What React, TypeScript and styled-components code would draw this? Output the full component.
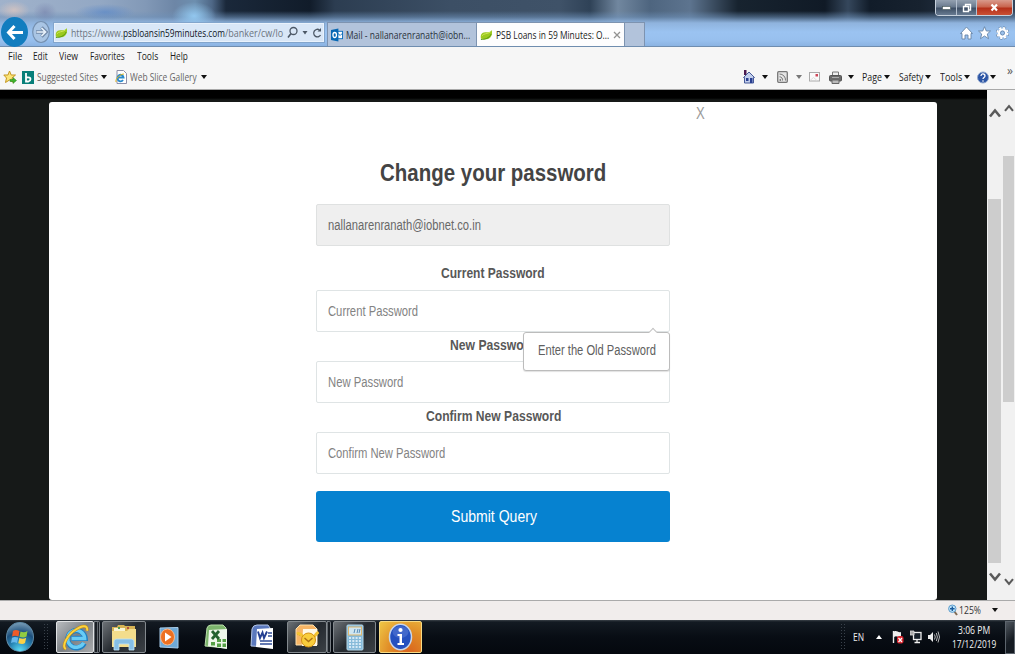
import React, { useLayoutEffect, useRef, useState } from "react";
import styled, { createGlobalStyle, css } from "styled-components";

const UI = `"Open Sans", "Noto Sans", sans-serif`;
const SANS = `"Liberation Sans", Arial, sans-serif`;

const GlobalStyle = createGlobalStyle`
  *, *::before, *::after { box-sizing: border-box; }
  html, body { margin: 0; padding: 0; overflow: hidden; }
  svg { display: block; flex: none; }
`;

/* Text squeezed horizontally to a given width */
const FitBox = styled.span<{ $w: number; $size: number; $color?: string; $bold?: boolean; $font?: string }>`
  display: block;
  flex: none;
  width: ${(p) => p.$w}px;
  white-space: nowrap;
  font-family: ${(p) => p.$font ?? UI};
  font-size: ${(p) => p.$size}px;
  font-weight: ${(p) => (p.$bold ? 700 : 400)};
  line-height: 1.25;
  color: ${(p) => p.$color ?? "#1c1c1c"};
`;
const FitInner = styled.span`
  display: inline-block;
  transform-origin: 0 50%;
`;

type FitProps = { w: number; size: number; color?: string; bold?: boolean; font?: string; children: React.ReactNode };
function Fit({ w, size, color, bold, font, children }: FitProps) {
  const ref = useRef<HTMLSpanElement>(null);
  const [scale, setScale] = useState(1);
  useLayoutEffect(() => {
    if (ref.current) setScale(w / ref.current.offsetWidth);
  }, [w]);
  return (
    <FitBox $w={w} $size={size} $color={color} $bold={bold} $font={font}>
      <FitInner ref={ref} style={{ transform: `scaleX(${scale})` }}>{children}</FitInner>
    </FitBox>
  );
}

const Screen = styled.div`
  width: 1015px;
  height: 654px;
  display: flex;
  flex-direction: column;
  overflow: hidden;
  background: #f6f6f6;
`;

/* ---------- Title area ---------- */
const Header = styled.header`
  height: 47px;
  flex: none;
  border-bottom: 1px solid #6f8daf;
  background:
    radial-gradient(ellipse 22px 14px at 194px 16px, rgba(150, 205, 245, 0.9), transparent),
    radial-gradient(ellipse 16px 9px at 14px 10px, rgba(225, 200, 190, 0.7), transparent),
    radial-gradient(ellipse 12px 10px at 45px 12px, rgba(110, 120, 165, 0.5), transparent),
    radial-gradient(ellipse 30px 8px at 105px 12px, rgba(80, 130, 200, 0.6), transparent),
    linear-gradient(to bottom, transparent 0 11px, rgba(110, 145, 185, 0.55) 17px, #8fb3dd 23px, #9bc3f1 32px, #98c0ee 40px, #8bb3e2 46px),
    linear-gradient(to right, #a0b2cb 0, #93a8c4 100px, #8299b7 145px, #6d86a6 175px, #6d8faf 195px, #4e6786 212px, #1a283a 226px, #111c2a 310px, #2c3d51 335px, #3c4f65 450px, #3f5268 560px, #2f4257 590px, #71879f 618px, #4e657f 650px, #5d748f 690px, #17232f 738px, #101a26 825px, #35475c 848px, #111c29 870px, #17222f 920px, #32455c 1015px);
`;
const TitleRow = styled.div`
  height: 22px;
  display: flex;
  justify-content: flex-end;
  align-items: flex-start;
  padding-right: 2px;
`;
const WindowButtons = styled.div`
  display: flex;
  height: 16px;
  border: 1px solid #c6d0dc;
  border-top: 0;
  border-radius: 0 0 4px 4px;
  overflow: hidden;
`;
const WinButton = styled.div<{ $w: number; $close?: boolean }>`
  width: ${(p) => p.$w}px;
  display: flex;
  align-items: center;
  justify-content: center;
  border-right: ${(p) => (p.$close ? "0" : "1px solid #b4c0cf")};
  background: ${(p) =>
    p.$close
      ? "linear-gradient(#d99a8c 0, #c9654f 45%, #b5301a 55%, #c95034 100%)"
      : "linear-gradient(#93a0b0 0, #6b7b8f 45%, #3f5066 55%, #687b92 100%)"};
`;
const NavRow = styled.div`
  height: 24px;
  display: flex;
  align-items: flex-start;
`;
const BackSlot = styled.div`
  width: 53px;
  display: flex;
  align-items: center;
  gap: 3px;
  margin-top: -5px;
  padding-left: 1px;
`;
const AddressBar = styled.div`
  width: 272px;
  height: 21px;
  display: flex;
  align-items: center;
  border: 1px solid #82a5cc;
  background: #d9e7f7;
  box-shadow: inset 0 0 0 1px #e9f2fc;
  padding-left: 1px;
`;
const AddressActions = styled.div`
  display: flex;
  align-items: center;
  gap: 4px;
  margin-left: 4px;
`;
const Tabs = styled.div`
  display: flex;
  margin-left: 2px;
  height: 24px;
`;
const Tab = styled.div<{ $w: number; $active?: boolean }>`
  width: ${(p) => p.$w}px;
  display: flex;
  align-items: center;
  gap: 3px;
  padding-left: 3px;
  border: 1px solid #7d93b0;
  border-bottom: 0;
  margin-right: -1px;
  background: ${(p) => (p.$active ? "#fdfdfe" : "#b2c3db")};
`;
const HeaderIcons = styled.div`
  display: flex;
  gap: 5px;
  margin-left: auto;
  padding: 4px 6px 0 0;
`;

/* ---------- Menu + favourites ---------- */
const MenuBar = styled.nav`
  height: 19px;
  flex: none;
  display: flex;
  align-items: center;
  padding: 0 0 2px 8px;
`;
const MenuItem = styled.div<{ $gap: number }>`
  margin-right: ${(p) => p.$gap}px;
`;
const Favorites = styled.div`
  height: 24px;
  flex: none;
  display: flex;
  align-items: center;
  padding: 0 2px 1px 3px;
  border-bottom: 1px solid #a9a9a9;
`;
const Gap = styled.div<{ $l: number }>`
  margin-left: ${(p) => p.$l}px;
  flex: none;
  display: flex;
  align-items: center;
`;
const Push = styled.div`
  margin-left: auto;
  display: flex;
  align-items: center;
`;
const Caret = styled.i<{ $c?: string }>`
  display: block;
  flex: none;
  border: 3px solid transparent;
  border-top: 4px solid ${(p) => p.$c ?? "#111"};
  border-bottom: 0;
`;
const More = styled.div`
  margin: -14px 0 0 11px;
`;

/* ---------- Page ---------- */
const Page = styled.main`
  height: 510px;
  flex: none;
  display: flex;
  background: #161918;
`;
const Backdrop = styled.div`
  flex: 1;
  padding: 12px 50px 0 49px;
  background: linear-gradient(#000 0 8px, #161918 10px);
`;
const Modal = styled.section`
  position: relative;
  height: 498px;
  background: #fff;
  border-radius: 3px;
  display: flex;
  flex-direction: column;
  align-items: center;
  padding-top: 56px;
`;
const Close = styled.div`
  position: absolute;
  left: 647px;
  top: 2px;
`;
const Form = styled.form`
  width: 354px;
  display: flex;
  flex-direction: column;
  align-items: center;
`;
const Field = styled.div<{ $disabled?: boolean }>`
  position: relative;
  width: 354px;
  height: 42px;
  display: flex;
  align-items: center;
  padding: 1px 0 0 11px;
  border: 1px solid ${(p) => (p.$disabled ? "#dfe1e1" : "#dfe4e5")};
  border-radius: 2px;
  background: ${(p) => (p.$disabled ? "#efefef" : "#fff")};
`;
const Label = styled.div<{ $h: number; $pad?: number }>`
  height: ${(p) => p.$h}px;
  padding-top: ${(p) => p.$pad ?? 5}px;
`;
const Heading = styled.div`
  height: 46px;
`;
const Tooltip = styled.div`
  position: absolute;
  right: -1px;
  top: 41px;
  z-index: 2;
  width: 147px;
  height: 39px;
  display: flex;
  align-items: center;
  padding: 0 0 1px 14px;
  background: #fff;
  border: 1px solid #bcbcbc;
  border-radius: 3px;
  box-shadow: 0 1px 1px rgba(0, 0, 0, 0.12);
  &::before {
    content: "";
    position: absolute;
    right: 13px;
    top: -4px;
    width: 6px;
    height: 6px;
    background: #fff;
    border: 1px solid #c4c4c4;
    border-right: 0;
    border-bottom: 0;
    transform: rotate(45deg);
  }
`;
const Submit = styled.div`
  width: 354px;
  height: 51px;
  margin-top: 17px;
  display: flex;
  align-items: center;
  justify-content: center;
  padding-left: 1px;
  border-radius: 3px;
  background: #0682d0;
`;
const ScrollBar = styled.div<{ $w: number; $top: number; $bottom: number }>`
  width: ${(p) => p.$w}px;
  display: flex;
  flex-direction: column;
  justify-content: space-between;
  align-items: center;
  background: #f1f1f1;
  padding: ${(p) => p.$top}px 0 ${(p) => p.$bottom}px;
`;
const Thumb = styled.div<{ $h: number; $above: number }>`
  width: calc(100% - 2px);
  height: ${(p) => p.$h}px;
  margin: ${(p) => p.$above}px 0 auto;
  background: #cdcdcd;
`;

/* ---------- Status + taskbar ---------- */
const Status = styled.div`
  height: 20px;
  flex: none;
  display: flex;
  align-items: center;
  justify-content: flex-end;
  padding: 0 17px 1px 0;
  background: #f1edec;
  border-top: 1px solid #aaa;
`;
const Taskbar = styled.footer`
  height: 34px;
  flex: none;
  display: flex;
  align-items: center;
  background: linear-gradient(#3a4148 0, #131a22 2px, #080d14 50%, #04080e 100%);
`;
const Orb = styled.div`
  width: 28px;
  height: 30px;
  margin-left: 6px;
  display: flex;
  align-items: center;
  justify-content: center;
  border-radius: 50%;
  border: 1px solid #5f8ba8;
  background: radial-gradient(circle at 50% 100%, #5fe0f8 0, #2583b4 35%, #1d4f7c 60%, #8fb0c6 100%);
`;
const Dots = styled.div`
  width: 6px;
  height: 28px;
  background: radial-gradient(circle, #3a424b 0.7px, transparent 1px) 0 0 / 3px 3px;
`;
const tones = {
  active: css`background: linear-gradient(135deg, #b9bcbf, #7c8186 50%, #a9abad); border-color: #e0e2e4;`,
  plain: css`background: linear-gradient(135deg, #6c7176, #24292f 50%, #3b4045); border-color: #83898e;`,
  alert: css`background: radial-gradient(ellipse at 70% 110%, #d9601d 0, #e08c27 50%, #efc746 100%); border-color: #f6da85;`,
  none: css`border-color: transparent;`,
};
const TaskButton = styled.div<{ $w: number; $l: number; $tone: keyof typeof tones }>`
  width: ${(p) => p.$w}px;
  height: 32px;
  margin-left: ${(p) => p.$l}px;
  display: flex;
  align-items: center;
  justify-content: center;
  border: 1px solid;
  border-radius: 2px;
  ${(p) => tones[p.$tone]}
`;
const Stack = styled.div<{ $w: number }>`
  width: ${(p) => p.$w}px;
  height: 32px;
  border: 1px solid #777d83;
  border-left: 0;
  border-radius: 0 2px 2px 0;
  background: repeating-linear-gradient(to right, #5f656b 0 1px, #1a1f25 1px 3px);
`;
const Tray = styled.div`
  margin-left: auto;
  display: flex;
  align-items: center;
  height: 34px;
`;
const Clock = styled.div`
  width: 45px;
  margin-left: 11px;
  display: flex;
  flex-direction: column;
  align-items: center;
`;
const ShowDesktop = styled.div`
  width: 10px;
  height: 33px;
  margin-left: 9px;
  border: 1px solid #5c646c;
  background: linear-gradient(135deg, #50575f, #151b22 60%);
`;

/* ---------- Icons ---------- */
const Leaf = () => (
  <svg width="13" height="12" viewBox="0 0 14 12">
    <path d="M1 10C0 4 3 3 7 3C10 3 12 2 12.500 0.500C14 5 12 10 7 10.500C4 11 3 10 1 10Z" fill="#9cc91f" />
    <path d="M1 10.800C5 11 10 9.500 12 5" stroke="#4f9410" fill="none" />
    <path d="M2 7C4 4 8 5 11 3" stroke="#d0e85b" fill="none" />
  </svg>
);
const Chevron = ({ w, down }: { w: number; down?: boolean }) => (
  <svg width={w} height={w - 2} viewBox="0 0 12 10">
    <path d={down ? "M1 1.500L6 7.500L11 1.500" : "M1 8.500L6 2.500L11 8.500"} fill="none" stroke="#5a5a5a" strokeWidth="2.600" />
  </svg>
);
const IeGlyph = ({ s }: { s: number }) => (
  <svg width={s} height={s} viewBox="0 0 28 28">
    <path d="M23 20A9 9 0 1 1 24 15H10" fill="none" stroke="#1d7fc4" strokeWidth="5.500" />
    <path d="M22.500 19.500A8.800 8.800 0 1 1 23.500 15H10" fill="none" stroke="#68ccf5" strokeWidth="3.600" />
    <path d="M4 26C-1 23 6 11 14 6C20 2 27 0 26 7" fill="none" stroke="#c78b0c" strokeWidth="3" />
    <path d="M4 26C-1 23 6 11 14 6C20 2 27 0 26 7" fill="none" stroke="#fbd440" strokeWidth="2" />
  </svg>
);

export default function App() {
  return (
    <Screen>
      <GlobalStyle />
      <Header>
        <TitleRow>
          <WindowButtons>
            <WinButton $w={21}>
              <svg width="9" height="4"><rect x=".5" y=".5" width="8" height="3" fill="#fff" stroke="#455" strokeWidth=".6" /></svg>
            </WinButton>
            <WinButton $w={20}>
              <svg width="10" height="10"><path d="M3.500 3V1.500H8.500V7H7M1.500 3.500H6.500V8.500H1.500Z" fill="none" stroke="#fff" strokeWidth="1.400" /></svg>
            </WinButton>
            <WinButton $w={35} $close>
              <svg width="9" height="9"><path d="M1.500 1.500L7 7.500M7 1.500L1.500 7.500" stroke="#fff" strokeWidth="2.200" /></svg>
            </WinButton>
          </WindowButtons>
        </TitleRow>
        <NavRow>
          <BackSlot>
            <svg width="28" height="30" viewBox="0 0 28 30">
              <ellipse cx="13.500" cy="15" rx="13.500" ry="15" fill="#127dbf" />
              <path d="M22 15.500H8M13.500 9L7.500 15.500L13.500 22" fill="none" stroke="#fff" strokeWidth="3" />
            </svg>
            <svg width="20" height="24" viewBox="0 0 20 24">
              <ellipse cx="9" cy="12" rx="8.300" ry="10.500" fill="#a9c5e4" stroke="#7590b0" strokeWidth="1.200" />
              <path d="M4 12H14M9.500 7.500L14 12L9.500 16.500" fill="none" stroke="#7189a8" strokeWidth="3.400" />
              <path d="M4.500 12H13.500M9.500 8L13.500 12L9.500 16" fill="none" stroke="#e8f1fa" strokeWidth="1.700" />
            </svg>
          </BackSlot>
          <AddressBar>
            <Leaf />
            <Gap $l={3}>
              <Fit w={52} size={11} color="#6c757f">https://www.</Fit>
              <Fit w={102} size={11} color="#10161d">psbloansin59minutes.com</Fit>
              <Fit w={58} size={11} color="#6c757f">/banker/cw/lo</Fit>
            </Gap>
            <AddressActions>
              <svg width="11" height="13"><circle cx="6.500" cy="5" r="3.500" fill="none" stroke="#4c5866" strokeWidth="1.300" /><path d="M4 7.500L1 11.500" stroke="#4c5866" strokeWidth="1.600" /></svg>
              <svg width="6" height="4"><path d="M0.500 0H5.500L3 3.500Z" fill="#4c5866" /></svg>
              <svg width="11" height="12"><path d="M8.500 8A3.600 3.800 0 1 1 7.500 3" fill="none" stroke="#4c5866" strokeWidth="1.400" /><path d="M5.500 4.500H9V1Z" fill="#4c5866" /></svg>
            </AddressActions>
          </AddressBar>
          <Tabs>
            <Tab $w={150}>
              <svg width="12" height="14" viewBox="0 0 13 14">
                <rect x="7" y="3" width="5.500" height="8" fill="#fff" stroke="#0a6ebd" />
                <path d="M7 5L10 7.500L12.500 5" fill="none" stroke="#0a6ebd" />
                <path d="M0 1.500L8 0V14L0 12.500Z" fill="#0768b4" />
                <ellipse cx="4" cy="7" rx="1.900" ry="2.700" fill="none" stroke="#fff" strokeWidth="1.400" />
              </svg>
              <Fit w={124} size={11} color="#2b333c">Mail - nallanarenranath@iobn...</Fit>
            </Tab>
            <Tab $w={149} $active>
              <Leaf />
              <Fit w={113} size={11}>PSB Loans in 59 Minutes: O...</Fit>
              <Gap $l={1}>
                <svg width="8" height="8"><path d="M1 1L7 7M7 1L1 7" stroke="#929292" strokeWidth="1.300" /></svg>
              </Gap>
            </Tab>
            <Tab $w={21} />
          </Tabs>
          <HeaderIcons>
            <svg width="13" height="14" viewBox="0 0 13 14"><path d="M6.500 1L12.500 7.500H11V13H8V9H5V13H2V7.500H.5Z" fill="#fff" stroke="#6784a6" strokeWidth=".9" /></svg>
            <svg width="13" height="14" viewBox="0 0 13 14"><path d="M6.500 .7L8.300 5H12.500L9.300 8L10.500 12.700L6.500 10L2.500 12.700L3.700 8L.5 5H4.700Z" fill="#fff" stroke="#6784a6" strokeWidth=".9" /></svg>
            <svg width="13" height="14" viewBox="0 0 13 14">
              <circle cx="6.500" cy="7" r="5.200" fill="none" stroke="#6784a6" strokeWidth="3" strokeDasharray="2.500 1.580" />
              <circle cx="6.500" cy="7" r="5.200" fill="none" stroke="#fff" strokeWidth="1.800" strokeDasharray="2.300 1.780" />
              <circle cx="6.500" cy="7" r="3.500" fill="none" stroke="#fff" strokeWidth="2.200" />
              <circle cx="6.500" cy="7" r="2" fill="#9cc3ee" stroke="#6784a6" strokeWidth=".8" />
            </svg>
          </HeaderIcons>
        </NavRow>
      </Header>

      <MenuBar>
        <MenuItem $gap={11}><Fit w={14} size={11}>File</Fit></MenuItem>
        <MenuItem $gap={11}><Fit w={15} size={11}>Edit</Fit></MenuItem>
        <MenuItem $gap={12}><Fit w={19} size={11}>View</Fit></MenuItem>
        <MenuItem $gap={12}><Fit w={35} size={11}>Favorites</Fit></MenuItem>
        <MenuItem $gap={12}><Fit w={21} size={11}>Tools</Fit></MenuItem>
        <MenuItem $gap={0}><Fit w={18} size={11}>Help</Fit></MenuItem>
      </MenuBar>

      <Favorites>
        <svg width="14" height="14" viewBox="0 0 14 14">
          <path d="M6.500 1L8.200 5H12.500L9 8L10.500 12.500L6.500 10L2.500 12.500L3.500 8L.8 5H5Z" fill="#fbe477" stroke="#c59720" />
          <path d="M7 9.500H10V7.500L13.500 10.500L10 13.500V11.500H7Z" fill="#3fb52e" stroke="#28801d" strokeWidth=".5" />
        </svg>
        <Gap $l={5}>
          <svg width="12" height="13" viewBox="0 0 12 13"><rect width="12" height="13" fill="#087f79" /><path d="M4 2V10.500H6.500Q8.500 10 8.500 8Q8.500 6 4.500 6.500" fill="none" stroke="#fff" strokeWidth="1.800" /></svg>
        </Gap>
        <Gap $l={3}><Fit w={61} size={11} color="#666">Suggested Sites</Fit></Gap>
        <Gap $l={3}><Caret /></Gap>
        <Gap $l={8}>
          <svg width="12" height="14" viewBox="0 0 12 14">
            <path d="M2 .5H8.500L11.500 3.500V13.500H2Z" fill="#fff" stroke="#8d8fa8" />
            <path d="M8 10A3 3.300 0 1 1 8.500 7.500H3" fill="none" stroke="#2889cc" strokeWidth="1.900" />
            <path d="M1 12C0 9 5 4 9 4" fill="none" stroke="#e3b41d" />
          </svg>
        </Gap>
        <Gap $l={3}><Fit w={67} size={11} color="#666">Web Slice Gallery</Fit></Gap>
        <Gap $l={4}><Caret /></Gap>

        <Push>
          <svg width="12" height="14" viewBox="0 0 12 14">
            <path d="M1 0H3.500V5H1Z" fill="#4a1a50" />
            <path d="M6 2L11.500 7.500H10.500V13H1.500V7.500H.5Z" fill="#c3cfec" stroke="#465a98" />
            <path d="M3 8H5.500V11H3ZM7 8H9.500V13H7Z" fill="#293f91" />
          </svg>
          <Gap $l={7}><Caret /></Gap>
          <Gap $l={9}>
            <svg width="11" height="12" viewBox="0 0 11 12"><rect x=".7" y=".7" width="9.600" height="10.600" rx="1" fill="#e4e4e4" stroke="#777" strokeWidth="1.300" /><path d="M2.500 3A6 6 0 0 1 8.500 9.500M2.500 5.800A3 3 0 0 1 5.500 9.500" fill="none" stroke="#777" /><circle cx="3.300" cy="9" r=".9" fill="#777" /></svg>
          </Gap>
          <Gap $l={8}><Caret $c="#777" /></Gap>
          <Gap $l={7}>
            <svg width="11" height="10" viewBox="0 0 11 10"><rect x=".5" y=".5" width="10" height="8.500" fill="#fafafa" stroke="#aaa" /><path d="M1 8.500L4.500 5.500L8 8.500" stroke="#ddd" fill="none" /><rect x="6.500" y="2" width="2.500" height="2.500" fill="#ce4658" /></svg>
          </Gap>
          <Gap $l={9}>
            <svg width="13" height="13" viewBox="0 0 13 13"><path d="M3.500 5V1H9.500V5" fill="#eee" stroke="#777" /><rect x=".5" y="4.500" width="12" height="5.500" rx="1" fill="#6b6b6b" stroke="#555" /><path d="M3 9H10V12.500H3Z" fill="#bbb" stroke="#666" /><path d="M3 6.500H10" stroke="#aaa" /></svg>
          </Gap>
          <Gap $l={6}><Caret /></Gap>
          <Gap $l={8}><Fit w={20} size={11}>Page</Fit></Gap>
          <Gap $l={2}><Caret /></Gap>
          <Gap $l={9}><Fit w={24} size={11}>Safety</Fit></Gap>
          <Gap $l={2}><Caret /></Gap>
          <Gap $l={9}><Fit w={22} size={11}>Tools</Fit></Gap>
          <Gap $l={2}><Caret /></Gap>
          <Gap $l={7}>
            <svg width="12" height="13" viewBox="0 0 12 13"><circle cx="6" cy="6.500" r="5.500" fill="#2c55a5" stroke="#97acd0" /><path d="M4 5C4 2 8 2.500 8 5C8 6.500 6 6.500 6 8" fill="none" stroke="#fff" strokeWidth="1.300" /><circle cx="6" cy="10" r=".8" fill="#fff" /></svg>
          </Gap>
          <Gap $l={1}><Caret /></Gap>
          <More><Fit w={6} size={12} color="#555">»</Fit></More>
        </Push>
      </Favorites>

      <Page>
        <Backdrop>
          <Modal>
            <Close><Fit w={9} size={16} font={SANS} color="#9b9b9b">X</Fit></Close>
            <Form>
              <Heading><Fit w={226} size={24} bold font={SANS} color="#444">Change your password</Fit></Heading>
              <Field $disabled><Fit w={153} size={14} font={SANS} color="#686868">nallanarenranath@iobnet.co.in</Fit></Field>
              <Label $h={44} $pad={19}><Fit w={104} size={14} bold font={SANS} color="#585858">Current Password</Fit></Label>
              <Field>
                <Fit w={90} size={14} font={SANS} color="#838383">Current Password</Fit>
                <Tooltip><Fit w={118} size={14} font={SANS} color="#606060">Enter the Old Password</Fit></Tooltip>
              </Field>
              <Label $h={29}><Fit w={86} size={14} bold font={SANS} color="#585858">New Password</Fit></Label>
              <Field><Fit w={75} size={14} font={SANS} color="#838383">New Password</Fit></Field>
              <Label $h={29}><Fit w={135} size={14} bold font={SANS} color="#585858">Confirm New Password</Fit></Label>
              <Field><Fit w={117} size={14} font={SANS} color="#838383">Confirm New Password</Fit></Field>
              <Submit><Fit w={86} size={17} font={SANS} color="#fff">Submit Query</Fit></Submit>
            </Form>
          </Modal>
        </Backdrop>
        <ScrollBar $w={15} $top={18} $bottom={18}>
          <Chevron w={12} />
          <Thumb $h={364} $above={81} />
          <Chevron w={12} down />
        </ScrollBar>
        <ScrollBar $w={13} $top={14} $bottom={14}>
          <Chevron w={10} />
          <Thumb $h={246} $above={44} />
          <Chevron w={10} down />
        </ScrollBar>
      </Page>

      <Status>
        <svg width="10" height="12" viewBox="0 0 10 12"><path d="M6 7L9 11" stroke="#826c55" strokeWidth="2" /><circle cx="4.300" cy="4.700" r="3.700" fill="#bfe4fa" stroke="#5d9ccb" /><path d="M2 4.700H6.600M4.300 2.400V7" stroke="#1b5c9d" strokeWidth="1.400" /></svg>
        <Gap $l={1}><Fit w={22} size={11} color="#333">125%</Fit></Gap>
        <Gap $l={11}><Caret /></Gap>
      </Status>

      <Taskbar>
        <Orb>
          <svg width="18" height="18" viewBox="0 0 18 18">
            <path d="M2 3C4 1.500 6 2 8.500 3L7.500 8.500C5 7.500 3 7.500 1 8.500Z" fill="#ee5b27" />
            <path d="M9.500 3.500C12 4.500 14 4.500 16.500 3L15.500 8.500C13 10 11 9.500 8.500 8.700Z" fill="#92cc41" />
            <path d="M1 9.800C3 8.500 5 8.800 7.200 9.600L6 15C4 14 2 14 0 15Z" fill="#67b8ec" />
            <path d="M8.300 10C11 11 13 11 15.200 9.800L14 15C12 16.500 10 16 7.300 15.200Z" fill="#fbd246" />
          </svg>
        </Orb>
        <Gap $l={9}><Dots /></Gap>
        <TaskButton $w={38} $l={7} $tone="active"><IeGlyph s={27} /></TaskButton>
        <Stack $w={6} />
        <TaskButton $w={44} $l={2} $tone="plain">
          <svg width="26" height="28" viewBox="0 0 26 28">
            <path d="M1 4H6L7 2H13L14 3H24V22H1Z" fill="#d7b354" />
            <path d="M3 5H14V8H3Z" fill="#f8f4d3" /><path d="M7 4H9V6H7Z" fill="#4d9a50" /><path d="M16 4H18V6H16Z" fill="#b55340" />
            <path d="M1 8H16L18 6H25V24H1Z" fill="#f3dd8c" />
            <path d="M3 19C3 16 5 16 7 16H19C21 16 23 16 23 19V27H18V21H8V27H3Z" fill="#86bfe6" stroke="#c1e4f6" strokeWidth=".8" />
          </svg>
        </TaskButton>
        <TaskButton $w={24} $l={11} $tone="none">
          <svg width="20" height="23" viewBox="0 0 20 23">
            <path d="M1 2L19 1.500V22L1 21Z" fill="#6fa9d6" stroke="#a9cdea" />
            <ellipse cx="8.500" cy="11" rx="7" ry="8" fill="#ed7021" stroke="#f6b98e" />
            <path d="M6 6.500L12.500 11L6 15.500Z" fill="#fff" />
          </svg>
        </TaskButton>
        <TaskButton $w={28} $l={21} $tone="none">
          <svg width="24" height="26" viewBox="0 0 24 26">
            <path d="M3 4Q4 1 7 1H19L22 4V24L1 22Z" fill="#7db56d" stroke="#b8dba9" />
            <path d="M5 6L23 5V25L4 22Z" fill="#eef7ea" />
            <path d="M13 15H17V18H13ZM18.500 15H22V18H18.500ZM13 19.500H17V23H13ZM18.500 19.500H22V23H18.500ZM7 18H11V21.500H7Z" fill="#56a046" />
            <path d="M8 7L15 15M15 7L8 15" stroke="#24612f" strokeWidth="2.800" />
          </svg>
        </TaskButton>
        <TaskButton $w={28} $l={18} $tone="none">
          <svg width="24" height="26" viewBox="0 0 24 26">
            <path d="M1 22L2 5Q3 1 7 1H18L20 4V23Z" fill="#5b79bd" stroke="#b7c8e8" />
            <path d="M7 5L23 4V25L6 23Z" fill="#fff" />
            <path d="M18 9H22M18 12H22M10 17H22M10 20H22" stroke="#304e98" strokeWidth="1.700" />
            <path d="M8 7.500L10 14L12.500 8.500L14 14L17 7.500" stroke="#243f91" strokeWidth="1.900" fill="none" />
          </svg>
        </TaskButton>
        <TaskButton $w={40} $l={11} $tone="plain">
          <svg width="24" height="26" viewBox="0 0 24 26">
            <path d="M1 21V5L5 1H18L22 5V21Z" fill="#f7b565" stroke="#fbe0ae" />
            <path d="M8 5H22V22H7Z" fill="#fff8e4" />
            <path d="M2 10C4 9 6 10 8 13M19 13C21 10 22 9 23.500 8" stroke="#f4c332" strokeWidth="3" />
            <circle cx="13.500" cy="16" r="7" fill="#f9cd3c" stroke="#d39115" />
            <path d="M9.500 14L13.500 17.500L17.500 14" stroke="#ad7314" strokeWidth="1.400" fill="none" />
          </svg>
        </TaskButton>
        <Stack $w={4} />
        <TaskButton $w={43} $l={2} $tone="plain">
          <svg width="18" height="27" viewBox="0 0 18 27">
            <rect x="1" y="1" width="16" height="25" rx="1" fill="#86bad9" stroke="#b6d9ea" />
            <rect x="2.500" y="3" width="13" height="8" fill="#cfe6f1" stroke="#dfb66d" />
            <path d="M8 9L9 5M11 9L12 5M13 9L14 5" stroke="#5589b4" />
            <path d="M3 14H15M3 17H15M3 20H15M3 23H15" stroke="#eff9ff" strokeWidth="1.600" strokeDasharray="2 1.300" />
          </svg>
        </TaskButton>
        <TaskButton $w={43} $l={3} $tone="alert">
          <svg width="25" height="28" viewBox="0 0 25 28">
            <ellipse cx="12.500" cy="14" rx="11" ry="12.700" fill="#2450bf" stroke="#c9d6e8" strokeWidth="1.500" />
            <ellipse cx="12.500" cy="9" rx="8" ry="6" fill="#4168cb" />
            <circle cx="12.500" cy="7" r="2.100" fill="#fff" />
            <path d="M9.500 11H14V20H16V22H9.500V20H11.500V13H9.500Z" fill="#fff" />
          </svg>
        </TaskButton>
        <Tray>
          <Dots />
          <Gap $l={7}><Fit w={11} size={10} color="#eee">EN</Fit></Gap>
          <Gap $l={12}><svg width="6" height="4"><path d="M0 4L3 0L6 4Z" fill="#fff" /></svg></Gap>
          <Gap $l={10}>
            <svg width="12" height="14" viewBox="0 0 12 14"><path d="M1.500 1V13" stroke="#eee" strokeWidth="1.400" /><path d="M2 1.500C5 0 6 3 9 2V7C6 8 5 5 2 7Z" fill="#eee" /><rect x="5" y="6" width="6.500" height="7.500" rx="2" fill="#d6232c" /><path d="M6.500 8L10 12M10 8L6.500 12" stroke="#fff" strokeWidth="1.200" /></svg>
          </Gap>
          <Gap $l={6}>
            <svg width="12" height="14" viewBox="0 0 12 14"><rect x="3.500" y="2.500" width="7.500" height="7" fill="#17202a" stroke="#eee" strokeWidth="1.300" /><path d="M4.500 12.500H10M7 10V12" stroke="#eee" strokeWidth="1.300" /><path d="M0 1H4V5H0Z" fill="#aaa" stroke="#ddd" strokeWidth=".8" /></svg>
          </Gap>
          <Gap $l={6}>
            <svg width="12" height="14" viewBox="0 0 12 14"><path d="M0 5H2L5 2V12L2 9H0Z" fill="#eee" /><path d="M6.500 4.500Q8 7 6.500 9.500M8.300 3Q10.500 7 8.300 11M10 1.500Q13 7 10 12.500" fill="none" stroke="#ccc" strokeWidth=".9" /></svg>
          </Gap>
          <Clock>
            <Fit w={32} size={11} color="#f4f4f4">3:06 PM</Fit>
            <Fit w={44} size={11} color="#f4f4f4">17/12/2019</Fit>
          </Clock>
          <ShowDesktop />
        </Tray>
      </Taskbar>
    </Screen>
  );
}
